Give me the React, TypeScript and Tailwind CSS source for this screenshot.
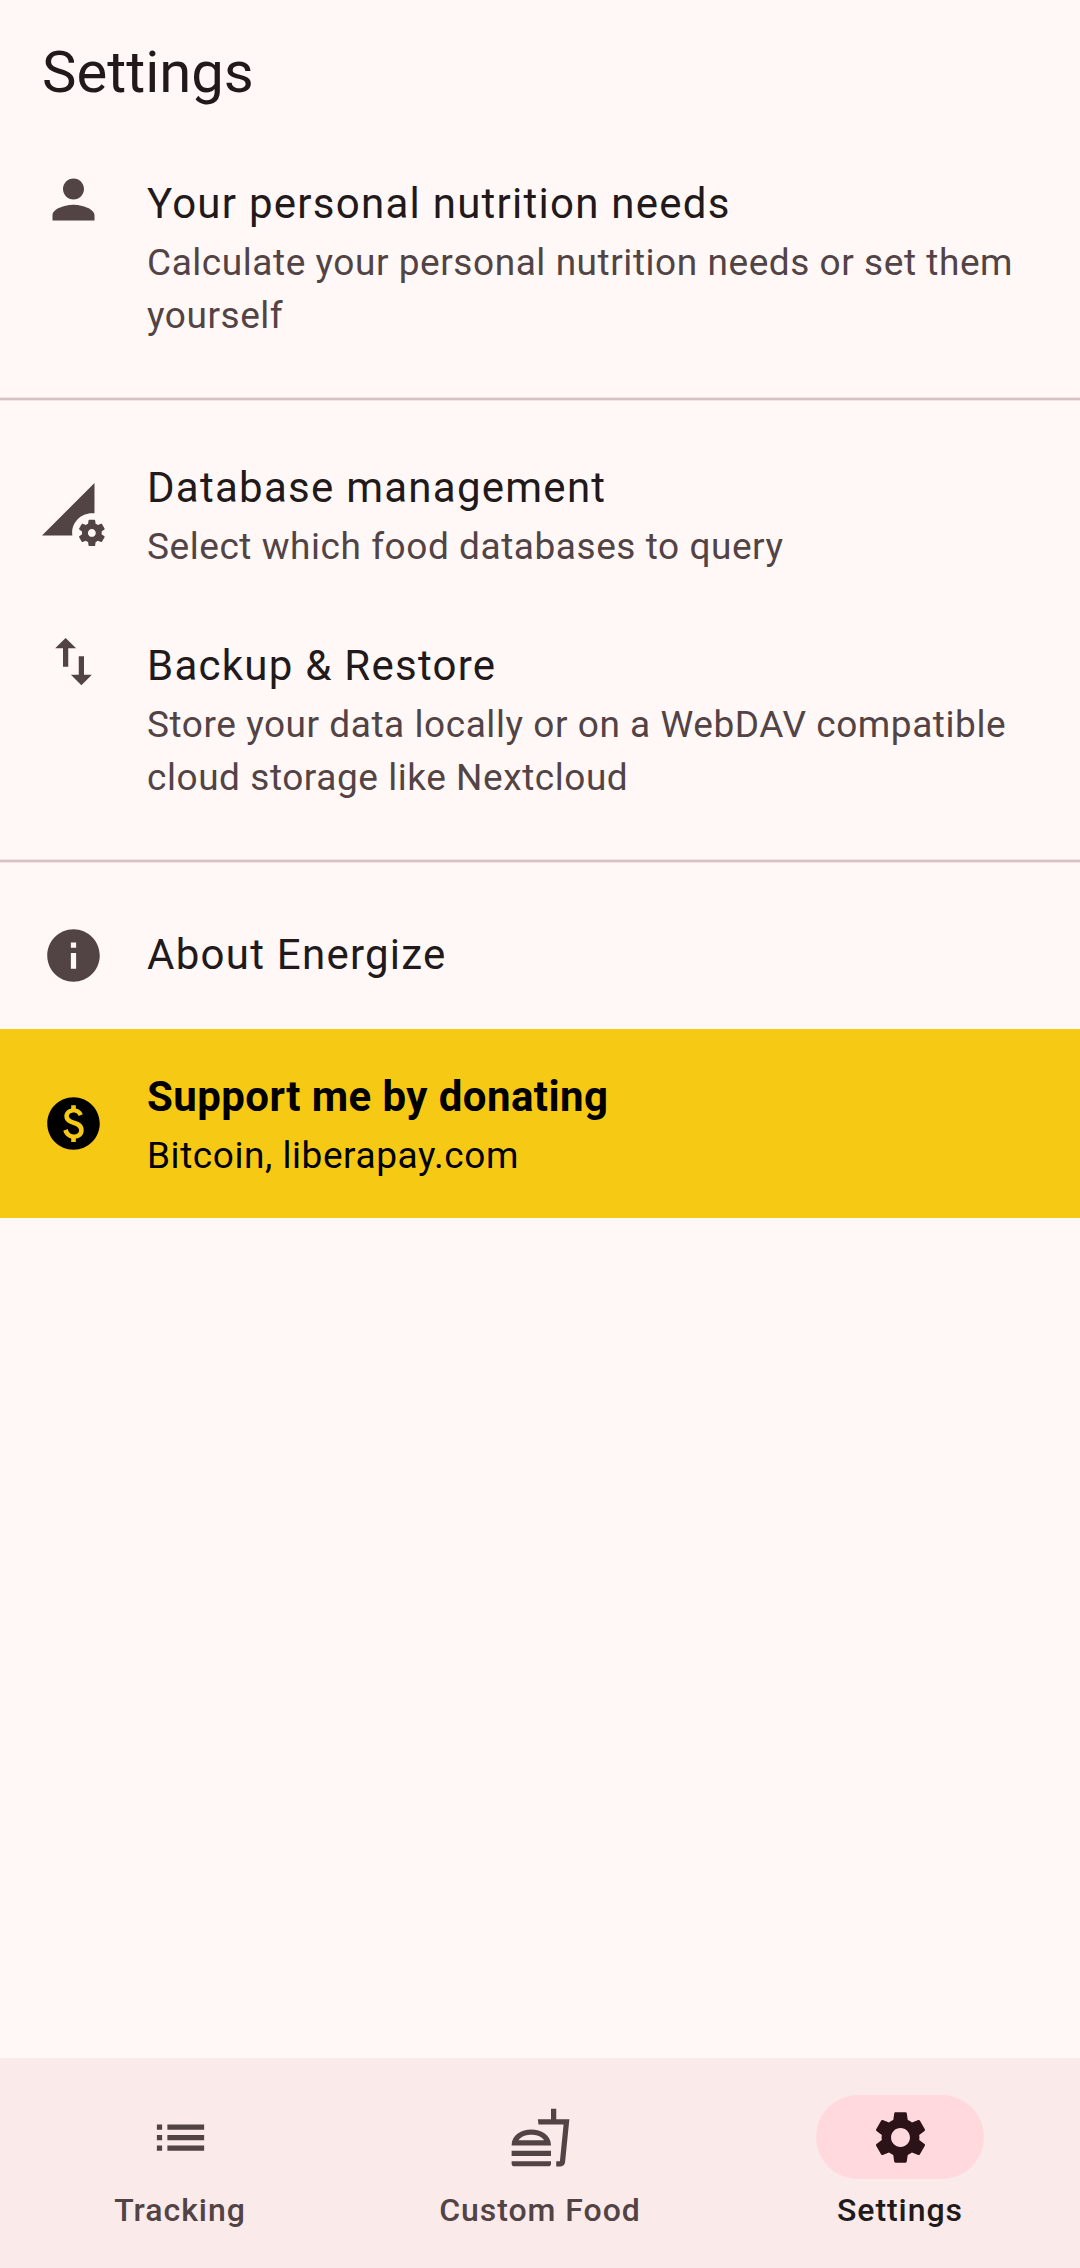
import type { ReactNode } from 'react'
import {
  MdImportExport,
  MdInfo,
  MdList,
  MdOutlineFastfood,
  MdPaid,
  MdPerson,
  MdSettings,
} from 'react-icons/md'

function DatabaseIcon() {
  return (
    <svg viewBox="0 0 24 24" fill="currentColor" className="size-[63px]" aria-hidden="true">
      <path d="M18.99 11.5c.34 0 .67.03 1 .07L20 0 0 20h11.56c-.04-.33-.07-.66-.07-1 0-4.14 3.36-7.5 7.5-7.5zm3.71 7.99c.02-.16.04-.32.04-.49 0-.17-.01-.33-.04-.49l1.06-.83c.09-.08.12-.21.06-.32l-1-1.73c-.06-.11-.19-.15-.31-.11l-1.24.5c-.26-.2-.54-.37-.85-.49l-.19-1.32c-.01-.12-.12-.21-.24-.21h-2c-.12 0-.23.09-.25.21l-.19 1.32c-.3.13-.59.29-.85.49l-1.24-.5c-.11-.04-.24 0-.31.11l-1 1.73c-.06.11-.04.24.06.32l1.06.83c-.02.16-.03.32-.03.49 0 .17.01.33.03.49l-1.06.83c-.09.08-.12.21-.06.32l1 1.73c.06.11.19.15.31.11l1.24-.5c.26.2.54.37.85.49l.19 1.32c.02.12.12.21.25.21h2c.12 0 .23-.09.25-.21l.19-1.32c.3-.13.59-.29.84-.49l1.25.5c.11.04.24 0 .31-.11l1-1.73c.06-.11.03-.24-.06-.32l-1.07-.83zm-3.71 1.01c-.83 0-1.5-.67-1.5-1.5s.67-1.5 1.5-1.5 1.5.67 1.5 1.5-.67 1.5-1.5 1.5z" />
    </svg>
  )
}

type ItemProps = {
  icon: ReactNode
  title: string
  text?: string
  tall?: boolean
  highlight?: boolean
}

function Item({ icon, title, text, tall, highlight }: ItemProps) {
  const box = tall
    ? 'items-start pt-[21px] pb-9'
    : text
      ? 'items-center min-h-[189px] py-9'
      : 'items-center py-[42px]'
  return (
    <li>
      <button
        type="button"
        className={`flex w-full gap-[42px] pr-[63px] pl-[42px] text-left ${box} ${highlight ? 'bg-[#f6c915] text-black' : ''}`}
      >
        <span className={`shrink-0 ${highlight ? 'text-black' : 'text-[#524345]'}`}>{icon}</span>
        <span className={tall ? 'block pt-[5px]' : 'block'}>
          <span
            className={`block pb-[2px] text-[42px] leading-[61px] ${highlight ? 'font-bold tracking-[0.01em]' : 'tracking-[0.03em]'}`}
          >
            {title}
          </span>
          {text && (
            <span
              className={`block text-[37px] leading-[53px] tracking-[0.015em] ${highlight ? 'text-black' : 'text-[#524345]'}`}
            >
              {text}
            </span>
          )}
        </span>
      </button>
    </li>
  )
}

function Divider() {
  return (
    <li className="py-[19px]" role="separator">
      <div className="h-1 border-y border-[#f3e5e6] bg-[#d7c1c4]" />
    </li>
  )
}

function Tab({ icon, label, active }: { icon: ReactNode; label: string; active?: boolean }) {
  return (
    <button
      type="button"
      aria-current={active ? 'page' : undefined}
      className={`flex flex-1 flex-col items-center py-[37px] ${active ? 'text-[#22191b]' : 'text-[#524345]'}`}
    >
      <span
        className={`flex h-[84px] w-[168px] items-center justify-center rounded-full ${active ? 'bg-[#ffd9de] text-[#2b1318]' : ''}`}
      >
        {icon}
      </span>
      <span className="pt-[10px] text-[32px] leading-[42px] font-medium tracking-[0.03em]">{label}</span>
    </button>
  )
}

export default function App() {
  return (
    <div className="flex min-h-screen flex-col bg-[#fff8f7] font-['Roboto',sans-serif] text-[#22191b]">
      <header className="flex h-[147px] items-center px-[42px] pb-[3px]">
        <h1 className="text-[58px] leading-[74px]">Settings</h1>
      </header>
      <main className="flex-1">
        <ul>
          <Item
            tall
            icon={<MdPerson className="size-[63px]" />}
            title="Your personal nutrition needs"
            text="Calculate your personal nutrition needs or set them yourself"
          />
          <Divider />
          <Item icon={<DatabaseIcon />} title="Database management" text="Select which food databases to query" />
          <Item
            tall
            icon={<MdImportExport className="size-[63px]" />}
            title="Backup &amp; Restore"
            text="Store your data locally or on a WebDAV compatible cloud storage like Nextcloud"
          />
          <Divider />
          <Item icon={<MdInfo className="size-[63px]" />} title="About Energize" />
          <Item
            highlight
            icon={<MdPaid className="size-[63px]" />}
            title="Support me by donating"
            text="Bitcoin, liberapay.com"
          />
        </ul>
      </main>
      <nav className="flex bg-[#faeaea]">
        <Tab icon={<MdList className="size-[63px]" />} label="Tracking" />
        <Tab icon={<MdOutlineFastfood className="size-[63px]" />} label="Custom Food" />
        <Tab active icon={<MdSettings className="size-[63px]" />} label="Settings" />
      </nav>
    </div>
  )
}
